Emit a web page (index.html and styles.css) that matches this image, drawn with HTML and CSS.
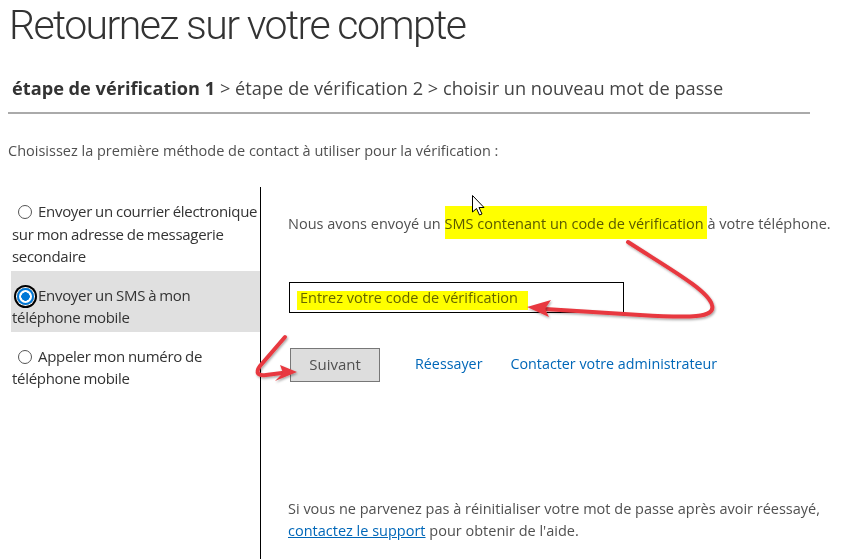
FILE: index.html
```html
<!DOCTYPE html>
<html>
<head>
  <title>Retournez sur votre compte</title>
  <meta name="viewport" content="width=device-width, initial-scale=1.0">
  <link rel="stylesheet" href="styles.css">
</head>
<body>
  <div class="page">
    <h1 class="title">Retournez sur votre compte</h1>
    <div class="steps"><b>étape de vérification 1</b> &gt; étape de vérification 2 &gt; choisir un nouveau mot de passe</div>
    <hr class="rule">
    <p class="intro">Choisissez la première méthode de contact à utiliser pour la vérification :</p>

    <div class="verify">
      <div class="methods">
        <label class="method"><input type="radio" name="method">Envoyer un courrier électronique sur mon adresse de messagerie secondaire</label>
        <label class="method selected"><input type="radio" name="method" checked>Envoyer un SMS à mon<br>téléphone mobile</label>
        <label class="method"><input type="radio" name="method">Appeler mon numéro de téléphone mobile</label>
      </div>

      <div class="panel">
        <p class="sent">Nous avons envoyé un <mark class="hl">SMS contenant un code de vérification </mark>à votre téléphone.</p>
        <div class="code-wrap">
          <input type="text" class="code" placeholder="Entrez votre code de vérification">
          <span class="hl-box"></span>
        </div>
        <div class="actions">
          <button type="button" class="btn">Suivant</button>
          <a href="#" class="link retry">Réessayer</a>
          <a href="#" class="link">Contacter votre administrateur</a>
        </div>
        <p class="help">Si vous ne parvenez pas à réinitialiser votre mot de passe après avoir réessayé, <a href="#" class="support">contactez le support</a> pour obtenir de l'aide.</p>
      </div>
    </div>

    <!-- annotations drawn over the screenshot -->
    <svg class="marks" width="858" height="559" viewBox="0 0 858 559">
      <defs>
        <filter id="shade" x="-10%" y="-10%" width="120%" height="120%">
          <feDropShadow dx="1" dy="1.5" stdDeviation="1" flood-color="#000" flood-opacity="0.35"/>
        </filter>
      </defs>
      <g filter="url(#shade)" fill="none" stroke="#e8393f" stroke-width="4" stroke-linecap="round">
        <path d="M628,242 C668,268 708,290 712,305 C716,318 690,318 640,315 L545,309"/>
        <path d="M285,337 L260,366 C255,373 258,376 266,375 L282,373"/>
      </g>
      <g filter="url(#shade)" fill="#e8393f">
        <path d="M527,307 L551,300 L545,309 L549,317 Z"/>
        <path d="M297,372 L280,365 L283,373 L275,381 Z"/>
      </g>
      <path class="cursor" d="M472.5,195.5 L472.5,212 L476.5,208.5 L479.5,215 L482,214 L479,207.5 L484,207.5 Z" fill="#fff" stroke="#000" stroke-width="1"/>
    </svg>
  </div>
</body>
</html>
```

FILE: styles.css
```css
body {
  margin: 0;
  background: #fff;
  font-family: "Open Sans", sans-serif;
  color: #505050;
}

.page {
  position: relative;
  width: 858px;
  height: 559px;
  overflow: hidden;
}

.title {
  margin: 0;
  padding: 0 0 0 9px;
  font-family: Roboto, "Open Sans", sans-serif;
  font-size: 41px;
  font-weight: 300;
  letter-spacing: -1.6px;
  line-height: 50px;
  color: #333;
}

.steps {
  margin: 26px 0 0 12px;
  font-size: 18.2px;
  line-height: 24px;
  color: #444;
}

.steps b {
  color: #333;
}

.rule {
  margin: 12px 48px 0 8px;
  border: 0;
  border-top: 2px solid #aaa;
}

.intro {
  margin: 26px 0 0 8px;
  font-size: 14.5px;
  line-height: 22px;
}

.verify {
  display: grid;
  grid-template-columns: 253px 1fr;
  margin: 25px 0 0 8px;
}

.methods {
  border-right: 1px solid #000;
  padding-bottom: 200px;
}

.method {
  display: block;
  margin-left: 3px;
  padding: 13px 0 3px 1px;
  font-size: 15px;
  letter-spacing: -0.3px;
  word-spacing: -0.5px;
  line-height: 22.5px;
  color: #333;
}

.method.selected {
  background: #e0e0e0;
}

.method input {
  appearance: none;
  width: 14px;
  height: 14px;
  margin: 0 6px 0 6px;
  border: 1px solid #555;
  border-radius: 50%;
  background: #fff;
  vertical-align: -2px;
}

.method input:checked {
  width: 17px;
  height: 17px;
  margin: 0 4px 0 5px;
  border: 2px solid #0078d7;
  background: radial-gradient(circle, #0078d7 0 4px, #fff 4.5px);
  box-shadow: 0 0 0 1px #fff, 0 0 0 3px #000;
  vertical-align: -4px;
}

.panel {
  padding-left: 27px;
  font-size: 14.5px;
  line-height: 22.5px;
}

.sent {
  margin: 26px 0 0;
}

.hl {
  background: #ff0;
  color: #5a5a00;
  padding: 8px 0 6px;
}

.code-wrap {
  position: relative;
  width: 335px;
  margin: 46px 0 0 1px;
}

.code {
  display: block;
  box-sizing: border-box;
  width: 335px;
  height: 31px;
  padding: 0 10px;
  border: 1px solid #000;
  font: inherit;
  outline: none;
}

.code::placeholder {
  color: #666;
}

.hl-box {
  position: absolute;
  left: 8px;
  top: 9px;
  width: 231px;
  height: 19px;
  background: #ff0;
  mix-blend-mode: multiply;
}

.actions {
  display: flex;
  align-items: center;
  margin: 35px 0 0 2px;
}

.btn {
  width: 90px;
  height: 34px;
  border: 1px solid #777;
  background: #ddd;
  color: #505050;
  font: inherit;
  font-size: 15px;
}

.link {
  color: #0067b8;
  text-decoration: none;
  margin-left: 28px;
  font-size: 14.3px;
}

.retry {
  margin-left: 35px;
}

.help {
  margin: 116px 0 0;
}

.support {
  color: #0067b8;
}

.marks {
  position: absolute;
  left: 0;
  top: 0;
  pointer-events: none;
}
```
